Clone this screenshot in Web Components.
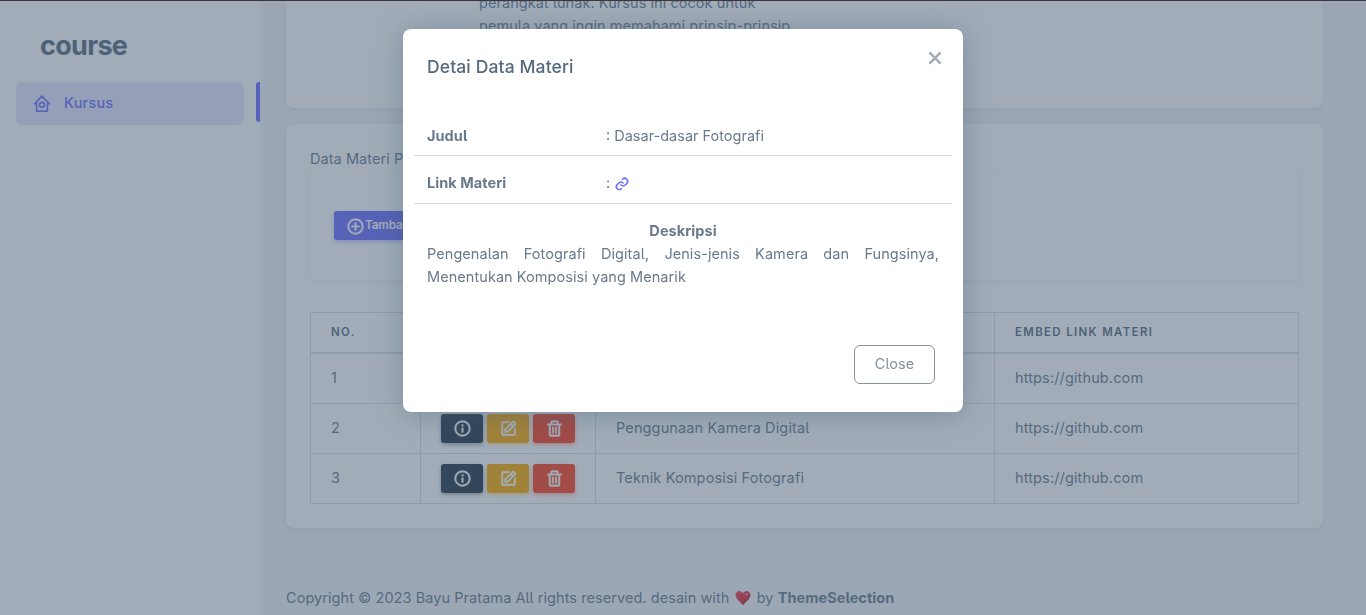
<!DOCTYPE html>
<html lang="id">
<head>
<meta charset="utf-8">
<title>course</title>
<style>
html,body{margin:0;height:100%;overflow:hidden}
body{background:#f5f5f9;color:#697a8d;font:400 14.5px/23px Inter,"Liberation Sans",sans-serif;letter-spacing:.06px;font-feature-settings:"cv05"}
</style>
</head>
<body>
<course-app></course-app>
<script>
const ICONS={
home:'<path d="M3 12 12 2.500l9 9.500M5.500 11v9.500h13V11" fill="none" stroke="currentColor" stroke-width="2" stroke-linejoin="round" stroke-linecap="round"/><circle cx="12" cy="13" r="3" fill="none" stroke="currentColor" stroke-width="2"/>',
info:'<path d="M12 2C6.486 2 2 6.486 2 12s4.486 10 10 10 10-4.486 10-10S17.514 2 12 2zm0 18c-4.411 0-8-3.589-8-8s3.589-8 8-8 8 3.589 8 8-3.589 8-8 8z"/><path d="M11 11h2v6h-2zm0-4h2v2h-2z"/>',
plus:'<path d="M12 2C6.486 2 2 6.486 2 12s4.486 10 10 10 10-4.486 10-10S17.514 2 12 2zm0 18c-4.411 0-8-3.589-8-8s3.589-8 8-8 8 3.589 8 8-3.589 8-8 8z"/><path d="M13 7h-2v4H7v2h4v4h2v-4h4v-2h-4z"/>',
edit:'<path d="m7 17.013 4.413-.015 9.632-9.54c.378-.378.586-.88.586-1.414s-.208-1.036-.586-1.414l-1.586-1.586c-.756-.756-2.075-.752-2.825-.003L7 12.583v4.43zM18.045 4.458l1.589 1.583-1.597 1.582-1.586-1.585 1.594-1.58zM9 13.417l6.03-5.973 1.586 1.586-6.029 5.971L9 15.006v-1.589z"/><path d="M5 21h14c1.103 0 2-.897 2-2v-8.668l-2 2V19H5V5h6.847l2-2H5c-1.103 0-2 .897-2 2v14c0 1.103.897 2 2 2z"/>',
trash:'<path fill-rule="evenodd" d="M5 20a2 2 0 0 0 2 2h10a2 2 0 0 0 2-2V8h2V6h-4V4a2 2 0 0 0-2-2H9a2 2 0 0 0-2 2v2H3v2h2zM9 4h6v2H9zM7 8h10v12H7z"/><path d="M9 10h2v8H9zm4 0h2v8h-2z"/>',
link:'<path d="M8.465 11.293c1.133-1.133 3.109-1.133 4.242 0l.707.707 1.414-1.414-.707-.707c-.943-.944-2.199-1.465-3.535-1.465s-2.592.521-3.535 1.465L4.929 12a5.008 5.008 0 0 0 0 7.071 4.983 4.983 0 0 0 3.535 1.462A4.982 4.982 0 0 0 12 19.071l.707-.707-1.414-1.414-.707.707a3.007 3.007 0 0 1-4.243 0 3.005 3.005 0 0 1 0-4.243l2.122-2.121z"/><path d="m12 4.929-.707.707 1.414 1.414.707-.707a3.007 3.007 0 0 1 4.243 0 3.005 3.005 0 0 1 0 4.243l-2.122 2.121c-1.133 1.133-3.109 1.133-4.242 0L10.586 12l-1.414 1.414.707.707c.943.944 2.199 1.465 3.535 1.465s2.592-.521 3.535-1.465L19.071 12a5.008 5.008 0 0 0 0-7.071 5.006 5.006 0 0 0-7.071 0z"/>',
close:'<path d="m4.500 4.500 15 15M19.500 4.500l-15 15" fill="none" stroke="currentColor" stroke-width="3.300"/>',
heart:'<defs><linearGradient id="g" x1="0" y1="0" x2="1" y2="1"><stop offset="0" stop-color="#f0405a"/><stop offset=".5" stop-color="#e8283c"/><stop offset="1" stop-color="#a01020"/></linearGradient></defs><path fill="url(#g)" d="M12 22C10 18 2 14 2 8c0-3.200 2.200-5.500 5-5.500 2.300 0 4.200 1.500 5 3.500.8-2 2.700-3.500 5-3.500 2.800 0 5 2.300 5 5.500 0 6-8 10-10 14z"/><ellipse cx="17" cy="7" rx="2" ry="1.500" fill="#ff8c94"/>'
};
function define(name,css,html){
  customElements.define(name,class extends HTMLElement{
    constructor(){super();this.attachShadow({mode:'open'}).innerHTML='<style>*{box-sizing:border-box}'+css+'</style>'+html;}
  });
}
customElements.define('bx-icon',class extends HTMLElement{
  connectedCallback(){
    if(this.shadowRoot)return;
    this.attachShadow({mode:'open'}).innerHTML='<style>:host{display:inline-flex;width:20px;height:20px;flex:none}svg{width:100%;height:100%;display:block;stroke:currentColor;stroke-width:var(--bold,0)}</style><svg viewBox="0 0 24 24" fill="currentColor">'+ICONS[this.getAttribute('name')]+'</svg>';
  }
});
define('app-sidebar',`
:host{display:flex;flex-direction:column;width:260px;flex:none;background:#fff}
.brand{height:82px;padding:29px 0 0 40px;font-size:27px;line-height:34px;font-weight:700;color:#566a7f;letter-spacing:-.7px}
.row{display:flex;justify-content:space-between;padding-left:16px}
.link{display:flex;align-items:center;width:228px;height:43px;padding-left:16px;gap:12px;border-radius:6px;background:rgba(105,108,255,.16);color:#696cff;font-weight:500;letter-spacing:.2px}
.link span{padding-bottom:2px}
.bar{width:4px;height:40px;border-radius:3px 0 0 3px;background:#696cff}`,
`<div class="brand">course</div><div class="row"><div class="link"><bx-icon name="home"></bx-icon><span>Kursus</span></div><div class="bar"></div></div>`);
define('app-card',`:host{display:block;box-sizing:border-box;background:#fff;border-radius:8px;box-shadow:0 2px 6px rgba(67,89,113,.12)}`,`<slot></slot>`);
define('app-button',`
:host{--bold:.5px;display:inline-flex;align-items:center;justify-content:center;box-sizing:border-box;height:29px;min-width:42px;padding:0 11px;border-radius:3px;color:#fff;font-size:11.7px;font-weight:600;letter-spacing:-.12px;white-space:nowrap;box-shadow:0 2px 4px var(--glow);background:var(--bg)}
::slotted(bx-icon){width:19px;height:19px}
:host([kind=primary]){--bg:#696cff;--glow:rgba(105,108,255,.4);padding-bottom:1px}
:host([kind=dark]){--bg:#233446;--glow:rgba(35,52,70,.4)}
:host([kind=warning]){--bg:#ffab00;--glow:rgba(255,171,0,.4)}
:host([kind=danger]){--bg:#ff3e1d;--glow:rgba(255,62,29,.4)}
:host([kind=primary]) ::slotted(bx-icon){margin:2px 0 0 1px}`,`<slot></slot>`);
const actions='<div class="acts"><app-button kind="dark"><bx-icon name="info"></bx-icon></app-button><app-button kind="warning"><bx-icon name="edit"></bx-icon></app-button><app-button kind="danger"><bx-icon name="trash"></bx-icon></app-button></div>';
define('materi-table',`
:host{display:block}
table{width:989px;table-layout:fixed;border-collapse:collapse}
th,td{border:1px solid #d9dee3;padding:0 20px 2px;text-align:left;height:50px;letter-spacing:.13px}
tbody tr:first-child td{height:51px}
th{height:40px;font-size:11.4px;font-weight:600;letter-spacing:1.38px;color:#566a7f;text-transform:uppercase;border-bottom-width:2px;padding:1px 20px 0}
.acts{display:flex;gap:4px;padding-top:2px}`,
`<table><colgroup><col style="width:110px"><col style="width:175px"><col style="width:399px"><col></colgroup>
<thead><tr><th>No.</th><th>Aksi</th><th>Judul</th><th>Embed Link Materi</th></tr></thead><tbody>
${['Dasar-dasar Fotografi','Penggunaan Kamera Digital','Teknik Komposisi Fotografi'].map((t,i)=>`<tr><td>${i+1}</td><td>${actions}</td><td>${t}</td><td>https://github.com</td></tr>`).join('')}
</tbody></table>`);
define('app-footer',`:host{display:flex;align-items:center;white-space:pre}bx-icon{width:18px;height:18px;margin:0 1px 0 0}b{font-weight:700}`,
`<span>Copyright © 2023 Bayu Pratama All rights reserved. desain with </span><bx-icon name="heart"></bx-icon><span> by <b>ThemeSelection</b></span>`);
define('detail-modal',`
:host{display:block;width:560px;height:383px;background:#fff;border-radius:8px;box-shadow:0 2px 28px rgba(67,89,113,.4)}
header{display:flex;justify-content:space-between;height:83px;padding:26px 19px 0 24px}
h5{margin:0;font-size:17.5px;line-height:24px;font-weight:500;color:#566a7f;letter-spacing:.12px}
header bx-icon{width:18px;height:18px;margin-top:-6px;color:#a1acb8}
.field{display:grid;grid-template-columns:179px 1fr;margin:0 11px;padding:12px 13px 8px;border-bottom:1px solid #d9dadb;height:44px}
.field+.field{height:48px;padding:15px 13px 9px}
b{font-weight:700}
.val{display:flex;align-items:center;white-space:pre;letter-spacing:0}
.val bx-icon{width:18px;height:18px;color:#696cff;margin:2px 0 0 -1px}
.desc{padding:15px 24px 0;text-align:justify}
.desc b{display:block;text-align:center}
footer{display:flex;justify-content:flex-end;padding:57px 28px 0}
button{width:81px;height:39px;font:inherit;letter-spacing:inherit;color:#8592a3;border:1px solid #8592a3;border-radius:6px;background:none;padding:0 0 2px}`,
`<header><h5>Detai Data Materi</h5><bx-icon name="close"></bx-icon></header>
<div class="field"><b>Judul</b><span class="val">: Dasar-dasar Fotografi</span></div>
<div class="field"><b>Link Materi</b><span class="val">: <bx-icon name="link"></bx-icon></span></div>
<div class="desc"><b>Deskripsi</b><span>Pengenalan Fotografi Digital, Jenis-jenis Kamera dan Fungsinya, Menentukan Komposisi yang Menarik</span></div>
<footer><button>Close</button></footer>`);
define('course-app',`
:host{display:flex;height:615px;overflow:hidden}
main{flex:1;padding:0 43px 0 26px;display:flex;flex-direction:column}
.info{flex:none;display:flex;flex-direction:column;justify-content:flex-end;height:108px;padding:0 0 71px 193px;border-radius:0 0 8px 8px;white-space:nowrap}
.list{flex:none;height:404px;margin-top:16px;padding:23px 24px}
.tools{height:110px;margin:0 0 32px;padding:41px 24px}
.tools app-button{width:160px;justify-content:flex-start}
app-footer{margin-top:58px}
.shade{position:fixed;inset:0;background:rgba(67,89,113,.5);display:flex;justify-content:center;align-items:flex-start;padding-top:29px;box-sizing:border-box}
.edge{position:fixed;top:0;left:0;right:0;height:1px;background:#3d373b}`,
`<app-sidebar></app-sidebar><main>
<app-card class="info"><div>perangkat lunak. Kursus ini cocok untuk</div><div>pemula yang ingin memahami prinsip-prinsip</div></app-card>
<app-card class="list"><div>Data Materi Pembelajaran</div><app-card class="tools"><app-button kind="primary"><bx-icon name="plus"></bx-icon>Tambah Materi</app-button></app-card><materi-table></materi-table></app-card>
<app-footer></app-footer></main>
<div class="shade"><detail-modal></detail-modal></div><div class="edge"></div>`);
</script>
</body>
</html>
